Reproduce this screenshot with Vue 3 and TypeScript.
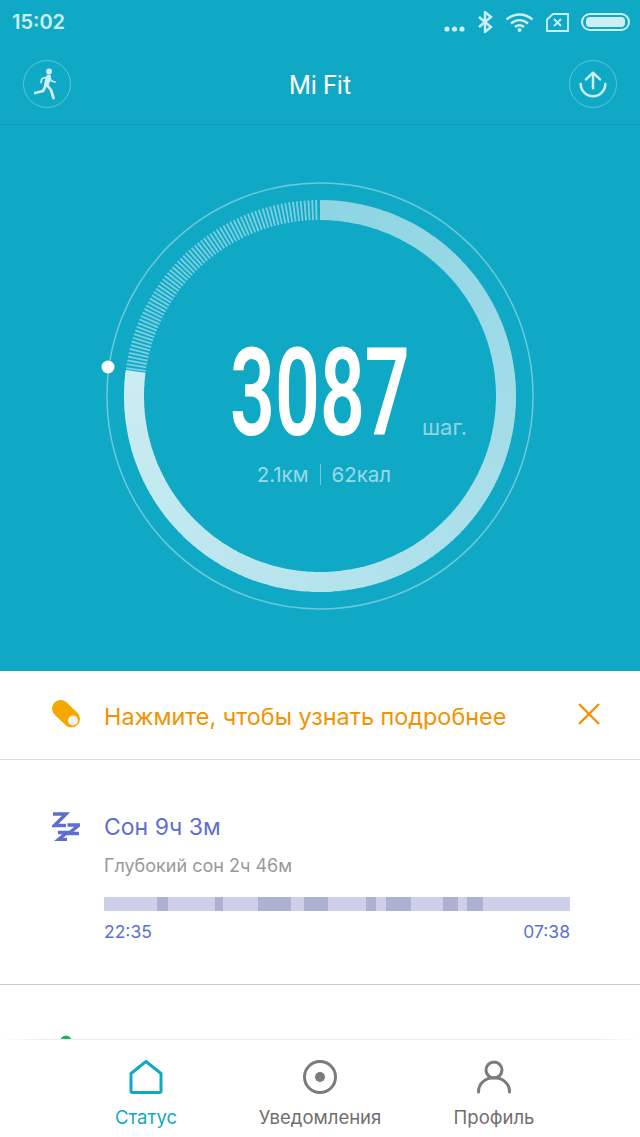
<template>
  <div class="screen">
    <div class="status-bar">
      <span class="time">15:02</span>
      <div class="status-icons">
        <svg width="21" height="6" viewBox="0 0 21 6"><circle cx="3" cy="3" r="2.6" /><circle cx="10.5" cy="3" r="2.6" /><circle cx="18" cy="3" r="2.6" /></svg>
        <svg width="16" height="22" viewBox="0 0 16 22" class="line"><path d="M2 6l12 10-6 5V1l6 5L2 16" /></svg>
        <svg width="29" height="20" viewBox="0 0 29 20" class="line">
          <path d="M1.5 7.5c8-6.6 18-6.6 26 0" />
          <path d="M6 11.5c5.200-4.300 11.800-4.300 17 0" />
          <path d="M10 15c2.900-2.300 6.100-2.300 9 0" />
          <circle cx="14.500" cy="18" r="2" class="fill" />
        </svg>
        <svg width="23" height="19" viewBox="0 0 23 19" class="line thin">
          <path d="M7 1h15v17H1V6.500z" />
          <path d="M8 6l7 7M15 6l-7 7" />
        </svg>
        <div class="battery"><div class="battery-level"></div></div>
      </div>
    </div>

    <header class="top-bar">
      <button class="round-btn">
        <svg width="26" height="32" viewBox="0 0 26 32">
          <circle cx="15" cy="3.500" r="3" class="runner-fill" />
          <path d="M14 9L8 10.500 7 14.500M15 9l2.500 4 3.500 1" class="runner-thin" />
          <path d="M14.500 9l-2 7.500" class="runner-body" />
          <path d="M12.500 16L9 23l-8 2M13 17l4 5 2.500 8" class="runner-leg" />
        </svg>
      </button>
      <h1 class="title">Mi Fit</h1>
      <button class="round-btn">
        <svg width="28" height="28" viewBox="0 0 28 28" class="upload">
          <path d="M1.700 14A12.300 12.300 0 0 0 26.300 14" />
          <path d="M14 2.700V18.300M7 9.300L14 2.700l7 6.600" />
        </svg>
      </button>
    </header>

    <section class="hero">
      <svg class="ring" width="440" height="440" viewBox="-220 -220 440 440">
        <circle r="213" class="ring-outer" />
        <path v-for="seg in solidSegments" :key="seg.d" :d="seg.d" :stroke="seg.color" class="ring-seg" />
        <line v-for="tick in ticks" :key="tick.x1" :x1="tick.x1" :y1="tick.y1" :x2="tick.x2" :y2="tick.y2" class="ring-tick" />
        <circle cx="-212" cy="-29" r="6.500" fill="#fff" />
      </svg>
      <div class="hero-text">
        <div class="count-row">
          <span class="count">3087</span>
          <span class="unit">шаг.</span>
        </div>
        <div class="stats">
          <span class="stat-left">2.1км</span>
          <i class="stat-sep"></i>
          <span>62кал</span>
        </div>
      </div>
    </section>

    <main class="list">
      <div class="tip">
        <svg width="28" height="28" viewBox="0 0 28 28">
          <path d="M8.500 8.500L19.500 19" class="pill" />
          <circle cx="21" cy="20.500" r="5" fill="#f2f2f2" />
        </svg>
        <span class="tip-text">Нажмите, чтобы узнать подробнее</span>
        <svg class="tip-close" width="22" height="22" viewBox="0 0 22 22"><path d="M1 1l20 20M21 1L1 21" /></svg>
      </div>

      <div class="sleep">
        <svg class="sleep-icon" width="28" height="29" viewBox="0 0 28 29">
          <path d="M1 2h13L2.500 13.500H14" />
          <path d="M15.500 13H27L16.500 21.500H27" />
          <path d="M6 20.500h9L6.500 27.500H15" />
        </svg>
        <div class="sleep-body">
          <div class="sleep-title">Сон 9ч 3м</div>
          <div class="sleep-sub">Глубокий сон 2ч 46м</div>
          <div class="sleep-bar">
            <div
              v-for="(seg, i) in sleepSegments"
              :key="i"
              :class="{ deep: seg.deep }"
              :style="{ width: seg.w + 'px' }"
            ></div>
          </div>
          <div class="sleep-times">
            <span>22:35</span>
            <span>07:38</span>
          </div>
        </div>
      </div>

      <div class="next-card">
        <svg width="12" height="12" viewBox="0 0 12 12"><circle cx="6" cy="6" r="5.500" fill="#14b866" /></svg>
      </div>
    </main>

    <nav class="tabs">
      <div class="tab active">
        <svg width="36" height="36" viewBox="0 0 36 36">
          <path d="M18 2.500L33 14.500V32a1.500 1.500 0 0 1-1.500 1.500h-27A1.500 1.500 0 0 1 3 32V14.500z" />
        </svg>
        <span>Статус</span>
      </div>
      <div class="tab">
        <svg width="36" height="36" viewBox="0 0 36 36">
          <circle cx="18" cy="18" r="15.500" />
          <circle cx="18" cy="18" r="5" class="tab-dot" />
        </svg>
        <span>Уведомления</span>
      </div>
      <div class="tab">
        <svg width="36" height="36" viewBox="0 0 36 36">
          <circle cx="18" cy="11" r="8" />
          <path d="M2.500 33c0-19 31-19 31 0" />
        </svg>
        <span>Профиль</span>
      </div>
    </nav>
  </div>
</template>

<script setup lang="ts">
const R = 186;
const INNER = 176;
const OUTER = 196;
const END_ANGLE = 277.6;

const point = (deg: number, r: number) => {
  const a = (deg * Math.PI) / 180;
  return { x: +(Math.sin(a) * r).toFixed(2), y: +(-Math.cos(a) * r).toFixed(2) };
};

const mix = (t: number) => {
  const from = [142, 212, 227];
  const to = [203, 236, 242];
  const c = from.map((v, i) => Math.round(v + (to[i] - v) * t));
  return `rgb(${c[0]},${c[1]},${c[2]})`;
};

const solidSegments = Array.from({ length: 140 }, (_, i) => {
  const start = (END_ANGLE / 140) * i;
  const end = Math.min(start + END_ANGLE / 140 + 0.3, END_ANGLE);
  const a = point(start, R);
  const b = point(end, R);
  return { d: `M${a.x} ${a.y}A${R} ${R} 0 0 1 ${b.x} ${b.y}`, color: mix(i / 139) };
});

const ticks = Array.from({ length: 72 }, (_, i) => {
  const deg = END_ANGLE + 0.6 + ((360 - END_ANGLE - 0.6) / 72) * i;
  const a = point(deg, INNER);
  const b = point(deg, OUTER);
  return { x1: a.x, y1: a.y, x2: b.x, y2: b.y };
});

const sleepSegments = [
  { w: 53, deep: false },
  { w: 11, deep: true },
  { w: 47, deep: false },
  { w: 8, deep: true },
  { w: 35, deep: false },
  { w: 33, deep: true },
  { w: 13, deep: false },
  { w: 24, deep: true },
  { w: 38, deep: false },
  { w: 10, deep: true },
  { w: 10, deep: false },
  { w: 25, deep: true },
  { w: 32, deep: false },
  { w: 15, deep: true },
  { w: 9, deep: false },
  { w: 16, deep: true },
  { w: 87, deep: false },
];
</script>

<style>
body {
  background: #fff;
}
</style>

<style scoped>
.screen {
  width: 640px;
  height: 1137px;
  display: flex;
  flex-direction: column;
  overflow: hidden;
  background: #fff;
  font-family: Inter, Roboto, sans-serif;
}

.status-bar {
  height: 48px;
  flex: none;
  display: flex;
  justify-content: space-between;
  padding: 0 10px 4px 12px;
  box-sizing: border-box;
  align-items: center;
  background: #10a9c5;
  color: #cdeef4;
}

.time {
  font-family: Inter, sans-serif;
  font-size: 20px;
  font-weight: 600;
}

.status-icons {
  display: flex;
  align-items: center;
  gap: 12px;
  fill: #cdeef4;
}

.status-icons > svg:first-child {
  margin-top: 14px;
}

.line {
  fill: none;
  stroke: #cdeef4;
  stroke-width: 2.4;
}

.line.thin {
  stroke-width: 1.8;
}

.line .fill {
  fill: #cdeef4;
  stroke: none;
}

.battery {
  width: 49px;
  height: 18px;
  box-sizing: border-box;
  border: 2px solid #cdeef4;
  border-radius: 9px;
  padding: 2px 3px;
}

.battery-level {
  height: 100%;
  background: #cdeef4;
  border-radius: 4px;
}

.top-bar {
  height: 77px;
  flex: none;
  box-sizing: border-box;
  display: flex;
  align-items: center;
  justify-content: space-between;
  padding: 0 23px 4px;
  background: #10a9c5;
  border-bottom: 1px solid #0d9db7;
}

.round-btn {
  width: 48px;
  height: 48px;
  padding: 0;
  display: flex;
  align-items: center;
  justify-content: center;
  border: 1.500px solid rgba(255, 255, 255, 0.3);
  border-radius: 50%;
  background: transparent;
}

.title {
  margin: 0;
  font-family: Roboto, sans-serif;
  font-size: 25px;
  line-height: 32px;
  padding-top: 4px;
  font-weight: 400;
  color: #fff;
}

.runner-fill {
  fill: #cdeef4;
}

.runner-thin,
.runner-body,
.runner-leg {
  fill: none;
  stroke: #cdeef4;
  stroke-linecap: round;
  stroke-linejoin: round;
}

.runner-thin {
  stroke-width: 1.800;
}

.runner-body {
  stroke-width: 5;
}

.runner-leg {
  stroke-width: 2.800;
}

.upload {
  fill: none;
  stroke: #cdeef4;
  stroke-width: 2.500;
  stroke-linecap: round;
  stroke-linejoin: round;
}

.hero {
  position: relative;
  height: 546px;
  flex: none;
  padding-top: 51px;
  box-sizing: border-box;
  background: #10a9c5;
}

.ring {
  display: block;
  margin: 0 auto;
}

.ring-outer {
  fill: none;
  stroke: #6cc8da;
  stroke-width: 1.500;
}

.ring-seg {
  fill: none;
  stroke-width: 20;
}

.ring-tick {
  stroke: #7dcfe0;
  stroke-width: 1.800;
}

.hero-text {
  position: absolute;
  inset: 0;
  padding-top: 226px;
}

.count-row {
  display: flex;
  align-items: flex-end;
  margin-left: 230px;
  gap: 14px;
}

.count {
  display: block;
  width: 178px;
  height: 86px;
  line-height: 86px;
  font-family: Roboto, sans-serif;
  font-size: 122px;
  font-weight: 600;
  color: #fff;
  white-space: nowrap;
  transform: scaleX(0.645);
  transform-origin: left;
}

.unit {
  font-size: 22px;
  line-height: 24px;
  color: #8fd5e3;
  margin-bottom: -2px;
}

.stats {
  display: grid;
  grid-template-columns: 1fr auto 1fr;
  column-gap: 11px;
  align-items: center;
  margin-top: 25px;
  font-size: 20.500px;
  color: #9ad9e6;
}

.stat-left {
  text-align: right;
}

.stat-sep {
  width: 1px;
  height: 21px;
  background: #6cc8da;
}

.list {
  flex: 1;
  min-height: 0;
  overflow: hidden;
}

.tip {
  height: 89px;
  box-sizing: border-box;
  display: flex;
  align-items: center;
  padding: 0 40px 2px 52px;
  border-bottom: 1px solid #ddd;
}

.pill {
  fill: none;
  stroke: #f5a800;
  stroke-width: 17;
  stroke-linecap: round;
}

.tip-text {
  flex: 1;
  margin-left: 24px;
  padding-top: 5px;
  font-size: 23.400px;
  color: #f39200;
}

.tip-close {
  fill: none;
  stroke: #f39200;
  stroke-width: 2.400;
}

.sleep {
  height: 225px;
  box-sizing: border-box;
  display: flex;
  padding: 52px 70px 0 52px;
  border-bottom: 1px solid #ccc;
}

.sleep-icon {
  flex: none;
  fill: none;
  stroke: #5f6fd0;
  stroke-width: 3.400;
  stroke-linejoin: miter;
}

.sleep-body {
  flex: 1;
  margin-left: 24px;
}

.sleep-title {
  font-size: 23px;
  line-height: 30px;
  color: #5f6fd0;
}

.sleep-sub {
  margin-top: 12px;
  font-size: 18px;
  line-height: 24px;
  color: #999;
}

.sleep-bar {
  display: flex;
  height: 14px;
  margin-top: 19px;
}

.sleep-bar div {
  flex: none;
  background: #cdd0e8;
}

.sleep-bar div.deep {
  background: #adb1d4;
}

.sleep-times {
  display: flex;
  justify-content: space-between;
  margin-top: 10px;
  font-size: 17.500px;
  line-height: 22px;
  color: #5f6fd0;
}

.next-card {
  padding: 50px 0 0 60px;
}

.next-card svg {
  display: block;
}

.tabs {
  height: 98px;
  flex: none;
  box-sizing: border-box;
  display: grid;
  grid-template-columns: repeat(3, 174px);
  padding: 19px 59px 0;
  background: #fff;
  border-top: 1px solid #eee;
  border-image: linear-gradient(90deg, transparent, #eee 40px, #eee 600px, transparent) 1;
}

.tab {
  display: flex;
  flex-direction: column;
  align-items: center;
  font-size: 18.500px;
  color: #6f6f6f;
}

.tab svg {
  fill: none;
  stroke: #7b7b7b;
  stroke-width: 3;
  stroke-linejoin: round;
  stroke-linecap: round;
}

.tab span {
  margin-top: 11px;
  white-space: nowrap;
}

.tab .tab-dot {
  fill: #7b7b7b;
  stroke: none;
}

.tab.active {
  color: #10a9c5;
}

.tab.active svg {
  stroke: #10a9c5;
}
</style>
